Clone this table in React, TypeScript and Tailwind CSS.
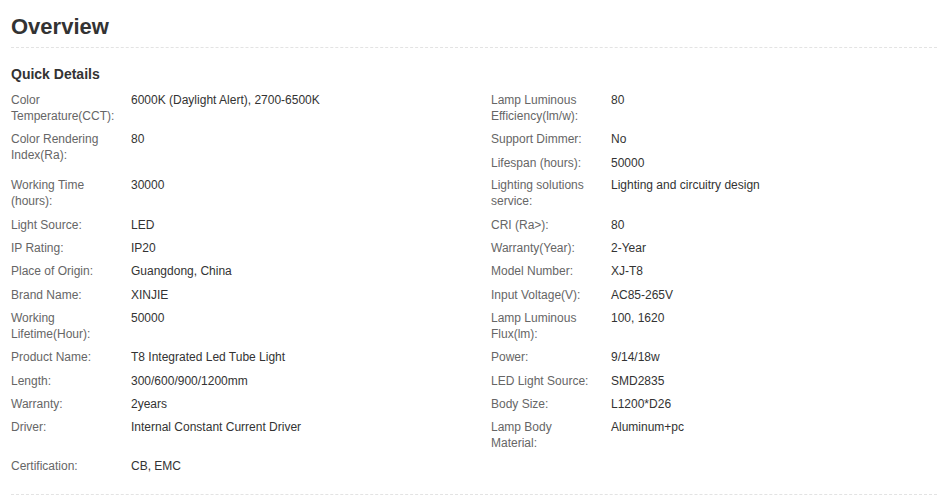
type Detail = {
  label: string;
  value: string;
  h: string;
};

const leftDetails: Detail[] = [
  { label: "Color Temperature(CCT):", value: "6000K (Daylight Alert), 2700-6500K", h: "h-[39px]" },
  { label: "Color Rendering Index(Ra):", value: "80", h: "h-[46px]" },
  { label: "Working Time (hours):", value: "30000", h: "h-[40px]" },
  { label: "Light Source:", value: "LED", h: "h-[23px]" },
  { label: "IP Rating:", value: "IP20", h: "h-[23px]" },
  { label: "Place of Origin:", value: "Guangdong, China", h: "h-[24px]" },
  { label: "Brand Name:", value: "XINJIE", h: "h-[23px]" },
  { label: "Working Lifetime(Hour):", value: "50000", h: "h-[39px]" },
  { label: "Product Name:", value: "T8 Integrated Led Tube Light", h: "h-[24px]" },
  { label: "Length:", value: "300/600/900/1200mm", h: "h-[23px]" },
  { label: "Warranty:", value: "2years", h: "h-[23px]" },
  { label: "Driver:", value: "Internal Constant Current Driver", h: "h-[39px]" },
  { label: "Certification:", value: "CB, EMC", h: "h-[23px]" },
];

const rightDetails: Detail[] = [
  { label: "Lamp Luminous Efficiency(lm/w):", value: "80", h: "h-[39px]" },
  { label: "Support Dimmer:", value: "No", h: "h-[24px]" },
  { label: "Lifespan (hours):", value: "50000", h: "h-[22px]" },
  { label: "Lighting solutions service:", value: "Lighting and circuitry design", h: "h-[40px]" },
  { label: "CRI (Ra>):", value: "80", h: "h-[23px]" },
  { label: "Warranty(Year):", value: "2-Year", h: "h-[23px]" },
  { label: "Model Number:", value: "XJ-T8", h: "h-[24px]" },
  { label: "Input Voltage(V):", value: "AC85-265V", h: "h-[23px]" },
  { label: "Lamp Luminous Flux(lm):", value: "100, 1620", h: "h-[39px]" },
  { label: "Power:", value: "9/14/18w", h: "h-[24px]" },
  { label: "LED Light Source:", value: "SMD2835", h: "h-[23px]" },
  { label: "Body Size:", value: "L1200*D26", h: "h-[23px]" },
  { label: "Lamp Body Material:", value: "Aluminum+pc", h: "h-[39px]" },
];

function DetailRow({ item }: { item: Detail }) {
  return (
    <div className={`flex text-xs leading-4 ${item.h}`}>
      <div className="w-[120px] shrink-0 pr-[15px] text-[#666]">{item.label}</div>
      <div className="flex-1 text-[#333]">{item.value}</div>
    </div>
  );
}

export default function App() {
  return (
    <div className="min-h-[497px] w-[947px] bg-white pl-[11px] pr-[10px] font-['Liberation_Sans',Arial,sans-serif]">
      <h2 className="pt-[13px] text-[22px] font-bold leading-[28px] text-[#333]">Overview</h2>
      <div className="mt-[6px] border-b border-dashed border-[#e3e3e3]" />

      <h3 className="mt-[16px] text-sm font-bold leading-5 text-[#333]">Quick Details</h3>

      <div className="mt-[8px] flex">
        <div className="flex w-[480px] flex-col">
          {leftDetails.map((item) => (
            <DetailRow item={item} key={item.label} />
          ))}
        </div>
        <div className="flex flex-1 flex-col">
          {rightDetails.map((item) => (
            <DetailRow item={item} key={item.label} />
          ))}
        </div>
      </div>

      <div className="mt-[13px] border-b border-dashed border-[#e3e3e3]" />
    </div>
  );
}
